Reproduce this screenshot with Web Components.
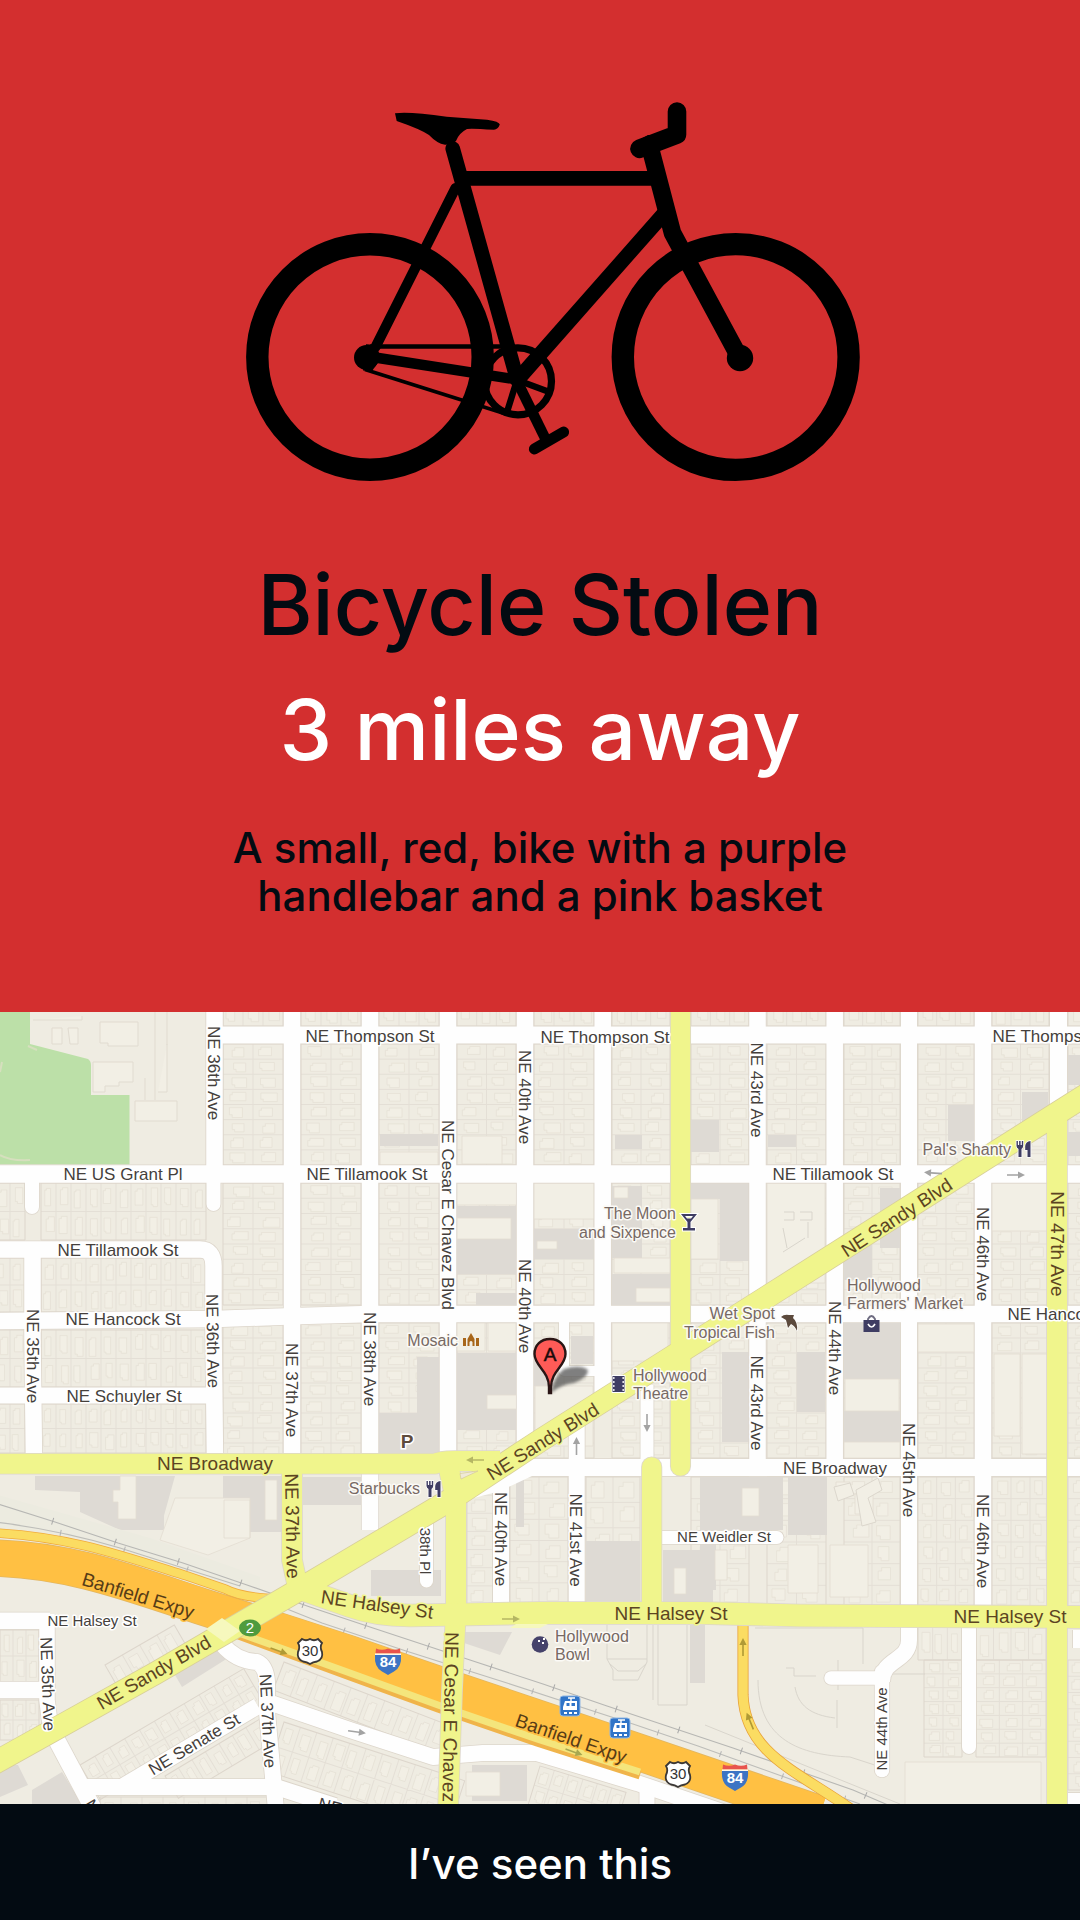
<!DOCTYPE html>
<html lang="en">
<head>
<meta charset="utf-8">
<meta name="viewport" content="width=device-width, initial-scale=1">
<title>Bicycle Stolen</title>
<style>
  html, body { margin: 0; min-height: 100%; }
  body { background: #030b12; font-family: Inter, "Open Sans", sans-serif; }
</style>
</head>
<body>
<stolen-alert>
  <alert-summary slot="summary">
    <bike-icon slot="icon"></bike-icon>
    <span slot="title">Bicycle Stolen</span>
    <span slot="distance">3 miles away</span>
    <span slot="details">A small, red, bike with a purple handlebar and a pink basket</span>
  </alert-summary>
  <street-map slot="map"></street-map>
  <report-button slot="action">I’ve seen this</report-button>
</stolen-alert>

<script>
const attach = (el, html) => { el.attachShadow({ mode: 'open' }).innerHTML = html; };

customElements.define('stolen-alert', class extends HTMLElement {
  constructor() {
    super();
    attach(this, `
      <style>
        :host { display: flex; min-height: 100vh; }
        main { display: flex; flex-direction: column; flex: 1; min-width: 0; }
      </style>
      <main><slot name="summary"></slot><slot name="map"></slot><slot name="action"></slot></main>`);
  }
});

customElements.define('alert-summary', class extends HTMLElement {
  constructor() {
    super();
    attach(this, `
      <style>
        :host { display: block; background: #d32f2f; color: #030b12; }
        section { display: flex; flex-direction: column; align-items: center; text-align: center; padding: 100px 24px 92px; }
        h1, h2, p { margin: 0; font-weight: 500; }
        h1, h2 { font-size: 84px; line-height: 96px; }
        h1 { margin-top: 73px; }
        h2 { margin-top: 29px; color: #fff; }
        p { margin-top: 46px; font-size: 42px; line-height: 48px; max-width: 680px; }
      </style>
      <section>
        <slot name="icon"></slot>
        <h1><slot name="title"></slot></h1>
        <h2><slot name="distance"></slot></h2>
        <p><slot name="details"></slot></p>
      </section>`);
  }
});

customElements.define('bike-icon', class extends HTMLElement {
  constructor() {
    super();
    attach(this, `
      <style>
        :host { display: block; width: 100%; max-width: 640px; }
        svg { display: block; width: 100%; height: auto; }
      </style>
      <svg viewBox="220 100 640 384" role="img" aria-label="Bicycle" fill="none" stroke="#000">
        <circle cx="370" cy="357" r="112.7" stroke-width="22.4"/>
        <circle cx="735.7" cy="357" r="112.9" stroke-width="22.4"/>
        <circle cx="366.5" cy="357.5" r="12.5" fill="#000" stroke="none"/>
        <circle cx="740" cy="358" r="13.2" fill="#000" stroke="none"/>
        <path d="M366 344.2C376 344 380 350 380 360L372 371L363 370.5Z" fill="#000" stroke="none"/>
        <path d="M452.7 148.5L517.3 380" stroke-width="14.6" stroke-linecap="round"/>
        <path d="M462 178.4H653M665 212.5L517.3 380" stroke-width="14.8"/>
        <path d="M455.5 188L375.5 347" stroke-width="10.2" stroke-linecap="round"/>
        <path d="M372 357L517 379.5" stroke-width="10.4"/>
        <path d="M370 346.5H510" stroke-width="4.6"/>
        <path d="M365 369.5L506 414" stroke-width="3.8"/>
        <circle cx="518" cy="381.3" r="33.5" stroke-width="7.2"/>
        <path d="M517 380L548 391.5M517 380L507 412" stroke-width="6.4"/>
        <path d="M517 381L547 442" stroke-width="10.6"/>
        <path d="M534.3 449L563.7 432" stroke-width="10.8" stroke-linecap="round"/>
        <path d="M677 111.5V134.5L639.5 148.8" stroke-width="18.6" stroke-linecap="round" stroke-linejoin="round"/>
        <path d="M650 147L672.5 233L736 351" stroke-width="17.6" stroke-linejoin="round"/>
        <path d="M640 139.5L648 135Q655 135 658 140Z" fill="#000" stroke="none"/>
        <path d="M395 113.3Q410 111.5 446.7 116.7L487 119.7Q499.5 121.5 499.8 124.5Q498 129.5 494 129.8Q470 128 467 129Q459 133 456 141Q452 145 445 144.8Q437 143.5 429 135Q420 129 396.7 121Z" fill="#000" stroke="none"/>
      </svg>`);
  }
});

customElements.define('report-button', class extends HTMLElement {
  constructor() {
    super();
    attach(this, `
      <style>
        :host { display: flex; flex: 1 0 116px; }
        button { flex: 1; border: 0; padding: 35px 24px 31px; background: #030b12; color: #fff;
                 font: 500 42px/48px Inter, "Open Sans", sans-serif; cursor: pointer; }
      </style>
      <button type="button"><slot></slot></button>`);
  }
});

/* ---- street map ---- */
let seed = 7;
const rnd = () => (seed = (seed * 16807) % 2147483647) / 2147483647;

/* Splits one city block into building lots, with a house outline in each. */
function lots(x0, y0, x1, y1, cols, rows) {
  let lines = '', houses = '';
  const w = (x1 - x0) / cols, h = (y1 - y0) / rows;
  for (let c = 1; c < cols; c++) lines += `M${x0 + c * w} ${y0}V${y1}`;
  for (let r = 1; r < rows; r++) lines += `M${x0} ${y0 + r * h}H${x1}`;
  for (let c = 0; c < cols; c++) for (let r = 0; r < rows; r++) {
    const a = x0 + c * w + w * (.15 + rnd() * .22), b = y0 + r * h + h * (.16 + rnd() * .12);
    const e = w * (.38 + rnd() * .18), f = h * (.5 + rnd() * .16), n = Math.min(e, f) * .28;
    houses += rnd() > .5 ? `M${a} ${b}h${e}v${f}h${-e + n}v${-n}h${-n}z` : `M${a} ${b + n}h${n}v${-n}h${e - n}v${f}h${-e}z`;
  }
  return `<path class="lot" d="${lines}"/><path class="house" d="${houses}"/><path class="edge" d="M${x0} ${y0}H${x1}V${y1}H${x0}Z"/>`;
}

function blocks() {
  let s = '';
  const cols = [[223,283],[301,361],[379,439],[457,516],[534,594],[612,670],[691,749],[767,826],[844,900],[918,974],[992,1049],[1068,1126]];
  for (const [a, b] of cols) {
    s += lots(a, 1002, b, 1026, 3, 1);
    s += lots(a, 1044, b, 1165, 2, 8);
    s += lots(a, 1183, b, 1305, 2, 8);
    s += lots(a, 1323, b, 1458, 2, 9);
    if (a > 690) s += lots(a, 1477, b, 1607, a > 900 ? 3 : 2, 6);
  }
  for (const [y0, y1] of [[1183,1240],[1258,1312],[1330,1387],[1404,1453]])
    s += lots(-20, y0, 25, y1, 3, 2) + lots(41, y0, 206, y1, 11, 2);
  s += lots(924, 1660, 962, 1757, 2, 7) + lots(976, 1660, 1046, 1757, 3, 7) + lots(918, 1627, 962, 1660, 3, 1) + lots(976, 1627, 1046, 1660, 4, 1);
  s += lots(1068, 1660, 1110, 1790, 2, 8) + lots(467, 1477, 493, 1604, 1, 7) + lots(510, 1477, 568, 1604, 2, 6) + lots(586, 1477, 640, 1604, 2, 5);
  s += lots(0, 1630, 39, 1682, 3, 2) + lots(0, 1700, 39, 1740, 3, 2);
  const tilt = (x, y, a, w, h, c, r) => `<g transform="translate(${x} ${y}) rotate(${a})">${lots(0, 0, w, h, c, r)}</g>`;
  s += tilt(80, 1765, -30.5, 190, 40, 11, 2) + tilt(105, 1665, -30, 80, 28, 4, 1);
  s += tilt(284, 1662, 21, 180, 30, 10, 1) + tilt(284, 1722, 18, 190, 52, 11, 2);
  s += tilt(165, 1776, -31, 110, 26, 7, 1) + tilt(540, 1766, 17, 90, 40, 6, 2);
  s += lots(100, 1797, 268, 1822, 8, 1);
  return s;
}

const road = (d, w, fill, cap = 'butt', edge = '#ddd6cb') => ({ d, w, fill, cap, edge });
function roads(list) {
  const draw = (r, c, w) => `<path d="${r.d}" fill="none" stroke="${c}" stroke-width="${w}" stroke-linecap="${r.cap}" stroke-linejoin="round"/>`;
  return list.map(r => draw(r, r.edge, r.w + 1.6)).join('') + list.map(r => draw(r, r.fill, r.w)).join('');
}
const W = '#fefefe', Y = '#f0f58c';
const white = [
  ...[292, 370].map(x => road(`M${x} 1005V1530`, 16.5, W)),
  road('M214.5 1005V1174', 16.5, W), road('M213.5 1174V1204', 14, W, 'round'),
  road('M32 1174V1207', 14, W, 'round'),
  road('M448 1005V1460', 16.5, W), road('M525 1005V1460', 16.5, W), road('M602.7 1005V1395', 16.5, W),
  road('M757.5 1005V1467M834.7 1005V1467', 16.5, W),
  road('M909 1005V1640C909 1662 882 1658 882 1682', 16, W), road('M882 1672V1770', 14.5, W, 'round'), road('M882 1678H831', 13.5, W, 'round'),
  road('M983 1005V1615', 16.5, W), road('M1058.5 1005V1120', 17, W), road('M969 1620V1747', 14, W, 'round'),
  road('M215 1035H1090', 17, W), road('M-5 1174H1090', 17.5, W),
  road('M-5 1249.5H200Q213.5 1249.5 213.5 1266V1330L215 1460', 16.5, W),
  road('M32.5 1249V1340L34 1460', 16.5, W),
  road('M-5 1321L215 1319L300 1316L370 1314H1090', 16.5, W), road('M-5 1395.5H215', 16, W),
  road('M520 1467.5H1090', 17, W), road('M501 1480V1610', 16, W), road('M576.7 1425V1610', 16, W),
  road('M647 1385V1465', 13, W), road('M426.5 1515V1581', 13, W, 'round'), road('M660 1537.5H777', 13, W, 'round'),
  road('M564 1320V1371H602', 10, W),
  road('M-5 1620.7H50', 16.5, W), road('M-5 1690H47', 16.5, W), road('M47 1614V1700L52 1740', 15.5, W),
  road('M54 1735L95 1812', 17, W), road('M80 1787H276L335 1806', 16, W),
  road('M258 1706L120 1788', 16, W), road('M222 1644Q236 1661 257 1662Q266 1666 267 1682V1712L276 1810', 16, W),
  road('M268 1702L350 1730L433 1757L483 1753L537 1753L637 1783L740 1818', 16, W), road('M647 1785V1810', 15, W),
  road('M1085 1630V1648', 24, W), road('M1068 1799H1090', 12, W)
];
const yellow = [
  road('M680.5 1000V1466', 19.5, Y, 'round'), road('M1057 1120V1810', 20, Y),
  road('M651.7 1467V1610', 19.5, Y, 'round'),
  road('M292 1464V1560L298 1588', 20, Y),
  road('M-5 1463.7H435Q440 1461 455 1461H500', 20, Y),
  road('M448 1465L456 1500V1610L452 1690L448 1810', 20, Y),
  road('M290 1585L350 1606Q375 1615 410 1615.5L540 1613L700 1613L800 1615.5L1090 1617', 22, Y),
  road('M-10 1765.5L155 1673.5L290 1595L450 1500L541 1440L1090 1092.5', 22, Y, 'butt', '#d8cf9a')
];

const rect = (x, y, w, h) => `M${x} ${y}h${w}v${h}h${-w}z`;
const grey = [[380,1134,58,12],[457,1206,60,68],[534,1229,60,30],[612,1186,30,72],[612,1274,58,31],[691,1120,28,32],[691,1183,58,16],[720,1183,29,78],[615,1135,27,14],
  [768,1135,28,12],[880,1188,20,60],[844,1245,28,35],[948,1105,26,36],[1022,1092,26,30],[1068,1055,14,30],[1068,1132,14,24],[476,1293,40,12],[455,1353,62,77],[379,1413,60,45],
  [417,1357,22,60],[534,1352,20,34],[571,1336,22,28],[722,1352,27,90],[797,1352,28,60],[844,1323,56,56],[844,1411,56,31],[700,1477,83,53],[788,1477,39,58],[223,1476,60,56],[303,1477,58,28],
  [586,1541,54,60],[663,1550,50,52],[700,1540,16,50],[371,1570,70,26],[516,1477,8,50],[472,1765,55,36],[690,1625,15,58],[705,1477,10,60],[150,1500,14,30]].map(a => rect(...a)).join('');
const pale = [[457,1218,54,21],[457,1183,60,22],[534,1183,60,36],[537,1241,20,8],[691,1199,27,60],[614,1187,14,11],[614,1258,56,15],[636,1288,34,14],
  [767,1183,58,100],[845,1379,54,32],[742,1488,17,28],[844,1442,56,16],[457,1323,28,28],[488,1323,28,28],[487,1395,30,14],[535,1386,58,60],[612,1323,56,38],
  [380,1152,58,13],[462,1136,40,28],[992,1183,56,48],[994,1354,26,82],[1022,1354,26,100],[918,1324,56,28],[224,1500,26,38],[265,1480,12,40],
  [836,1482,14,10],[855,1494,18,20],[788,1545,30,48],[830,1545,38,52],[905,1762,136,46],[466,1772,34,24],[674,1568,12,26],[715,1550,12,30]].map(a => rect(...a)).join('');

/* text, centre x, centre y, angle, size, kind */
const streets = [
  ['NE Thompson St',370,1036,0,17],['NE Thompson St',605,1037,0,17],['NE Thompson St',1057,1036,0,17],
  ['NE US Grant Pl',123,1174,0,17],['NE Tillamook St',367,1174,0,17],['NE Tillamook St',833,1174,0,17],['NE Tillamook St',118,1250,0,17],
  ['NE Hancock St',123,1319,0,17],['NE Hancock St',1065,1314,0,17],['NE Schuyler St',124,1396,0,17],
  ['NE Broadway',215,1464,0,19,'y'],['NE Broadway',835,1468,0,17],['NE Weidler St',724,1536,0,15],['NE Halsey St',92,1620,0,15],
  ['NE Halsey St',377,1605,8,19,'y'],['NE Halsey St',671,1614,0,19,'y'],['NE Halsey St',1010,1617,0,19,'y'],
  ['NE 36th Ave',214,1073,90,17],['NE 36th Ave',213,1341,89,17],['NE 35th Ave',33,1356,90,17],['NE 37th Ave',292,1390,90,17],['NE 38th Ave',370,1359,90,17],
  ['NE Cesar E Chavez Blvd',448,1215,90,17],['NE 40th Ave',525,1097,90,17],['NE 40th Ave',525,1306,90,17],['NE 43rd Ave',757,1090,90,17],['NE 43rd Ave',757,1403,90,17],
  ['NE 44th Ave',835,1348,90,17],['NE 45th Ave',909,1470,90,17],['NE 46th Ave',983,1254,90,17],['NE 46th Ave',983,1541,90,17],['NE 47th Ave',1057,1244,90,19,'y'],
  ['NE 37th Ave',292,1526,89,19,'y'],['NE 40th Ave',501,1539,90,17],['NE 41st Ave',576,1540,90,17],['38th Pl',426,1551,90,15],
  ['NE 35th Ave',48,1684,88,17],['NE 37th Ave',268,1721,87,17],['NE 44th Ave',881,1729,-90,15],['NE Cesar E Chavez',450,1717,91,19,'y'],
  ['NE Sandy Blvd',897,1218,-33,19,'y'],['NE Sandy Blvd',543,1442,-32,19,'y'],['NE Sandy Blvd',154,1673,-30,19,'y'],
  ['Banfield Expy',138,1596,17,19,'o'],['Banfield Expy',571,1739,19,19,'o'],['NE Senate St',194,1744,-31,17],
  ['NE',330,1806,15,17],['N',92,1806,60,17]
];
/* text, x, baseline, anchor */
const places = [
  ['The Moon',676,1219,'end'],['and Sixpence',676,1238,'end'],["Pal's Shanty",1011,1155,'end'],['Mosaic',458,1346,'end'],['Wet Spot',775,1319,'end'],['Tropical Fish',775,1338,'end'],
  ['Hollywood',847,1291,'start'],["Farmers' Market",847,1309,'start'],['Hollywood',633,1381,'start'],['Theatre',633,1399,'start'],['Starbucks',420,1494,'end'],
  ['Hollywood',555,1642,'start'],['Bowl',555,1660,'start']
];
const label = ([t, x, y, a, s, k = 'w']) => `<text class="s ${k}" transform="translate(${x} ${y}) rotate(${a})" dy="6" font-size="${s}">${t}</text>`;
const place = ([t, x, y, anchor]) => `<text class="p" x="${x}" y="${y}" text-anchor="${anchor}">${t}</text>`;
const arrow = (x, y, a, c = '#a3a3a3') => `<path transform="translate(${x} ${y}) rotate(${a})" d="M-9 -.8H2V-3.6L9 0L2 3.6V.8H-9Z" fill="${c}"/>`;
const fork = (x, y) => `<g transform="translate(${x} ${y})" fill="#3f3d63" stroke="#fff" stroke-width="1.6" paint-order="stroke"><path d="M-7 -8H-5.6V-4H-4.4V-8H-2.9V-4H-1.7V-8H-.3V-3Q-.5 -1 -2 0V8H-5V0Q-6.8 -1 -7 -3Z"/><path d="M7 -8V8H4V1H1.7V-3Q2.2 -7.6 7 -8Z"/></g>`;
const us = (x, y) => `<g transform="translate(${x} ${y})"><path d="M-8 -12Q-4 -9.5 0 -12Q4 -9.5 8 -12L12 -8Q9.5 -4 12 1Q13.5 8 7 10.5Q3 11 0 13Q-3 11 -7 10.5Q-13.5 8 -12 1Q-9.5 -4 -12 -8Z" fill="#fff" stroke="#3c3836" stroke-width="1.8"/><text class="n" y="5" fill="#333">30</text></g>`;
const inter = (x, y) => `<g transform="translate(${x} ${y})"><path d="M-13 -6H13Q14 6 6 10.5Q2 12.5 0 14Q-2 12.5 -6 10.5Q-14 6 -13 -6Z" fill="#3d74c4"/><path d="M-12.5 -7.5L-12 -12.5Q-6 -10 0 -12.5Q6 -10 12 -12.5L12.5 -7.5Z" fill="#e8544d"/><path d="M-13 -6.8H13" stroke="#fff" stroke-width="1.4"/><text class="n" y="6" fill="#fff" font-weight="700">84</text></g>`;
const train = (x, y) => `<g transform="translate(${x} ${y})"><rect x="-10" y="-10" width="20" height="20" rx="3" fill="#2f74c8" stroke="#8fb6e4"/><path d="M1 -8V-4M-2 -8H5" stroke="#fff" stroke-width="1.4"/><path fill-rule="evenodd" d="M-5 -5H7V4H-7V1ZM-3.5 -3V0H-.5V-3ZM1.5 -3V0H5V-3Z" fill="#fff"/><path d="M-6 7H7" stroke="#fff" stroke-width="2" stroke-dasharray="3 2"/></g>`;

customElements.define('street-map', class extends HTMLElement {
  constructor() {
    super();
    const rail1 = 'M-5 1503L55 1522L118 1543L183 1563L247 1585L310 1607L373 1628L470 1660L543 1684L607 1706L670 1727L733 1748L853 1790L895 1808';
    const rail2 = 'M-5 1522Q60 1530 120 1548L240 1586M282 1607L322 1623L406 1651L507 1683L633 1724L698 1746L762 1769L860 1804';
    const expy = 'M-5 1558C70 1560 130 1583 200 1606L285 1633L350 1654L460 1692L650 1756L820 1814';
    attach(this, `
      <style>
        :host { display: block; background: #efece2; }
        svg { display: block; width: 100%; height: auto; font-family: "Liberation Sans", Arial, sans-serif; }
        .lot { fill: none; stroke: #e4dfd6; stroke-width: 1; }
        .house { fill: #f2efe5; stroke: #e6e1d6; stroke-width: .8; }
        .edge { fill: none; stroke: #ddd6cc; stroke-width: 1; }
        .s { text-anchor: middle; fill: #453f3c; paint-order: stroke; stroke-width: 3; stroke-linejoin: round; stroke: #fff; }
        .y { stroke: #f0f58c; fill: #5c4422; }
        .o { stroke: #ffc043; fill: #573c16; }
        .p { font-size: 16px; fill: #776964; paint-order: stroke; stroke: #fbfaf6; stroke-width: 3; stroke-linejoin: round; }
        .n { font-size: 15px; text-anchor: middle; }
      </style>
      <svg viewBox="0 1012 1080 792" role="img" aria-label="Map of the area round NE Sandy Blvd">
        <rect y="1012" width="1080" height="792" fill="#efece2"/>
        ${blocks()}
        <path d="${grey}M35 1476H175L160 1530H140L120 1530L80 1512V1492L35 1490ZM458 1632L512 1632L500 1655L458 1641ZM175 1675L218 1650L228 1658L182 1687ZM0 1765H18L28 1785L0 1797ZM32 1790L62 1772L82 1804H32Z" fill="#dedad4"/>
        <path d="${pale}M120 1476H136V1519H118V1502H113V1490H120ZM175 1498L250 1498V1538L208 1555L160 1540Z" fill="#f2efe5" stroke="#e3ddd2" stroke-width=".8"/>
        <path d="M781 1280L826 1252M784 1212h10v8h-10M800 1212h12v8h-12M783 1228l4 20M783 1252l22 -14M808 1222v16M838 1660V1690M758 1680C758 1740 800 1755 850 1757L890 1770M755 1628H863V1664M607 1625V1659L613 1670V1680H638L647 1662V1625M607 1659H647M610 1664L618 1671H638L646 1664M653 1625V1700M658 1625V1705H687V1625M705 1725L900 1804M786 1668h8v8h22M837 1700v28M890 1674H925M795 1687C798 1705 810 1715 835 1718" fill="none" stroke="#d9d5cc"/>
        <path d="M834 1487l16 -4 4 12 -16 6zM856 1490l22 -12 4 12 -14 8 8 24 -14 4z" fill="#f2efe5" stroke="#dcd7cd"/>
        <path d="M30 1012H206V1165H130V1094H92V1062L30 1044Z" fill="#efece2"/>
        <path d="M33 1020H82V1016M52 1028h10v16h-10zM68 1028h10v16h-8zM100 1022h38v24h-30v-3h-8zM93 1062h40v20h-14v4h-14v6h-12zM135 1101h42v20h-42zM145 1078V1100M155 1012V1100M167 1012V1045M158 1092h9v-48" fill="#f2efe5" stroke="#e1dbd0"/>
        <path d="M0 1012H30V1044L88 1059Q91 1061 91 1065V1095H129.5V1164.5H0Z" fill="#bce0a8"/>
        <path d="M28 1046l9 4M2 1062l-2 10M0 1155q10 6 30 5" stroke="#d6dfbe" stroke-width="2" fill="none"/>
        <path d="M-5 1494L150 1538L260 1577V1600L-5 1530Z" fill="#ecebe0"/>
        ${roads(white)}
        <path d="M474 1498L500 1491L532 1476H560V1459H538L480 1480Z" fill="${W}"/>
        <path d="${rail1}" fill="none" stroke="#b7b7b4" stroke-width="1.1"/>
        <path d="${rail2}" fill="none" stroke="#bdbdb9" stroke-width="1.1"/>
        <path d="${rail1}" fill="none" stroke="#a9a9a9" stroke-width="7" stroke-dasharray="1 65" stroke-dashoffset="6"/>
        <path d="${rail2}" fill="none" stroke="#b3b3b3" stroke-width="6" stroke-dasharray="1 65"/>
        <path d="${expy}" fill="none" stroke="#e2b661" stroke-width="37.5"/>
        <path d="${expy}" fill="none" stroke="#ffc043" stroke-width="36"/>
        <path d="M225 1630L350 1676L438 1708L537 1742L640 1775" fill="none" stroke="#f0b44a" stroke-width="9"/>
        <path d="M225 1628L350 1673L438 1705L537 1739L640 1772" fill="none" stroke="#f4e57c" stroke-width="7"/>
        ${roads([road('M-5 1533C70 1537 120 1555 187 1576L225 1589Q242 1598 280 1599', 8, '#fbdc62', 'butt', '#f0ab3c'),
                 road('M743 1620V1695C745 1755 800 1772 855 1812', 9.5, '#fbdc62', 'butt', '#e8a23a')])}
        ${roads(yellow)}
        <path d="M460 1473.5L478 1471L461 1479Z" fill="#efe9d8" stroke="#d8cf9a" stroke-width=".8"/>
        <path d="M206 1629L222 1618L240 1631L224 1642Z" fill="#f6f8bd"/>
        <path d="M510 1628L516 1624H548L540 1628Z" fill="#f6f8bd"/>
        ${arrow(933,1173,184)}${arrow(1016,1175,0)}${arrow(647,1423,90)}${arrow(576.5,1446,-90)}${arrow(475,1460,180,'#b5b763')}${arrow(511,1619,0,'#b5b763')}
        ${arrow(357,1732,8)}${arrow(743,1647,-90,'#b09a35')}${arrow(750,1721,-112,'#b09a35')}${arrow(279,1651,20,'#b09a35')}${arrow(574,1752,20,'#a8a850')}
        ${streets.map(label).join('')}${places.map(place).join('')}
        <g transform="translate(689 1222)" stroke="#fff" stroke-width="2" paint-order="stroke"><path fill-rule="evenodd" d="M-8 -8H8L1.5 0V6H6V8.5H-6V6H-1.5V0ZM-4 -6L-2 -3.5H2L4 -6Z" fill="#3f3d63"/></g>
        ${fork(1023.5,1149)}${fork(433.5,1489)}
        <g fill="#a8661a" transform="translate(471 1340)"><path d="M-8 -2h3v8h-3zM5 -2h3v8h-3zM-3.5 6V-1L0 -7L3.5 -1V6H1.5V2Q0 0 -1.5 2V6Z"/></g>
        <g transform="translate(618.5 1384)"><path d="M-6.5 -8.5H6.5V8.5H-6.5Z" fill="#3f3d63" stroke="#fff"/><path d="M-4.7 -7V8M4.7 -7V8" stroke="#e9e7ef" stroke-width="1.5" stroke-dasharray="2 2"/></g>
        <path d="M781 1317Q784 1314 789 1315L794 1315L793 1318Q798 1322 797 1331Q795 1326 791 1324L788 1328L786 1320Z" fill="#5c4a3d" stroke="#fff" stroke-width="1.5" paint-order="stroke"/>
        <g transform="translate(871.5 1324)"><path d="M-3.5 -2V-5Q0 -11 3.5 -5V-2" fill="none" stroke="#6d6b80" stroke-width="1.8"/><path d="M-8 -4H8V8H-8Z" fill="#3f3d63"/><path d="M-3.5 0Q0 6 3.5 0" fill="none" stroke="#fff" stroke-width="1.6"/></g>
        <text x="407" y="1448" text-anchor="middle" font-size="19" font-weight="700" fill="#5f4c3d" stroke="#fff" stroke-width="3" paint-order="stroke">P</text>
        <circle cx="540" cy="1644.5" r="8.3" fill="#45426a"/><path d="M538 1641h2M542 1643h2M543 1639h2" stroke="#fff" stroke-width="2"/>
        <ellipse cx="250" cy="1628" rx="11" ry="8.5" fill="#4f9b3e"/><text class="n" x="250" y="1633" fill="#fff">2</text>
        ${us(310,1651)}${us(678,1774)}${inter(388,1661)}${inter(735,1777)}${train(570,1706)}${train(620,1728)}
        <defs><filter id="soft" x="-20%" y="-20%" width="140%" height="140%"><feGaussianBlur stdDeviation="1.6"/></filter></defs>
        <path d="M551 1393Q554 1376 564 1369Q580 1364 588 1370Q588 1378 574 1383Q562 1384 551 1393Z" fill="#555" opacity=".75" filter="url(#soft)"/>
        <path d="M550 1339C541 1339 534.5 1345 534.5 1354C534.5 1366 549 1371 549 1387V1393H551V1387C551 1371 565.5 1366 565.5 1354C565.5 1345 559 1339 550 1339Z" fill="#ff5b57" stroke="#2a1515" stroke-width="2.4"/>
        <text x="550" y="1361" text-anchor="middle" font-size="19" fill="#1c0a0a" stroke="#1c0a0a" stroke-width=".5">A</text>
      </svg>`);
  }
});
</script>
</body>
</html>
